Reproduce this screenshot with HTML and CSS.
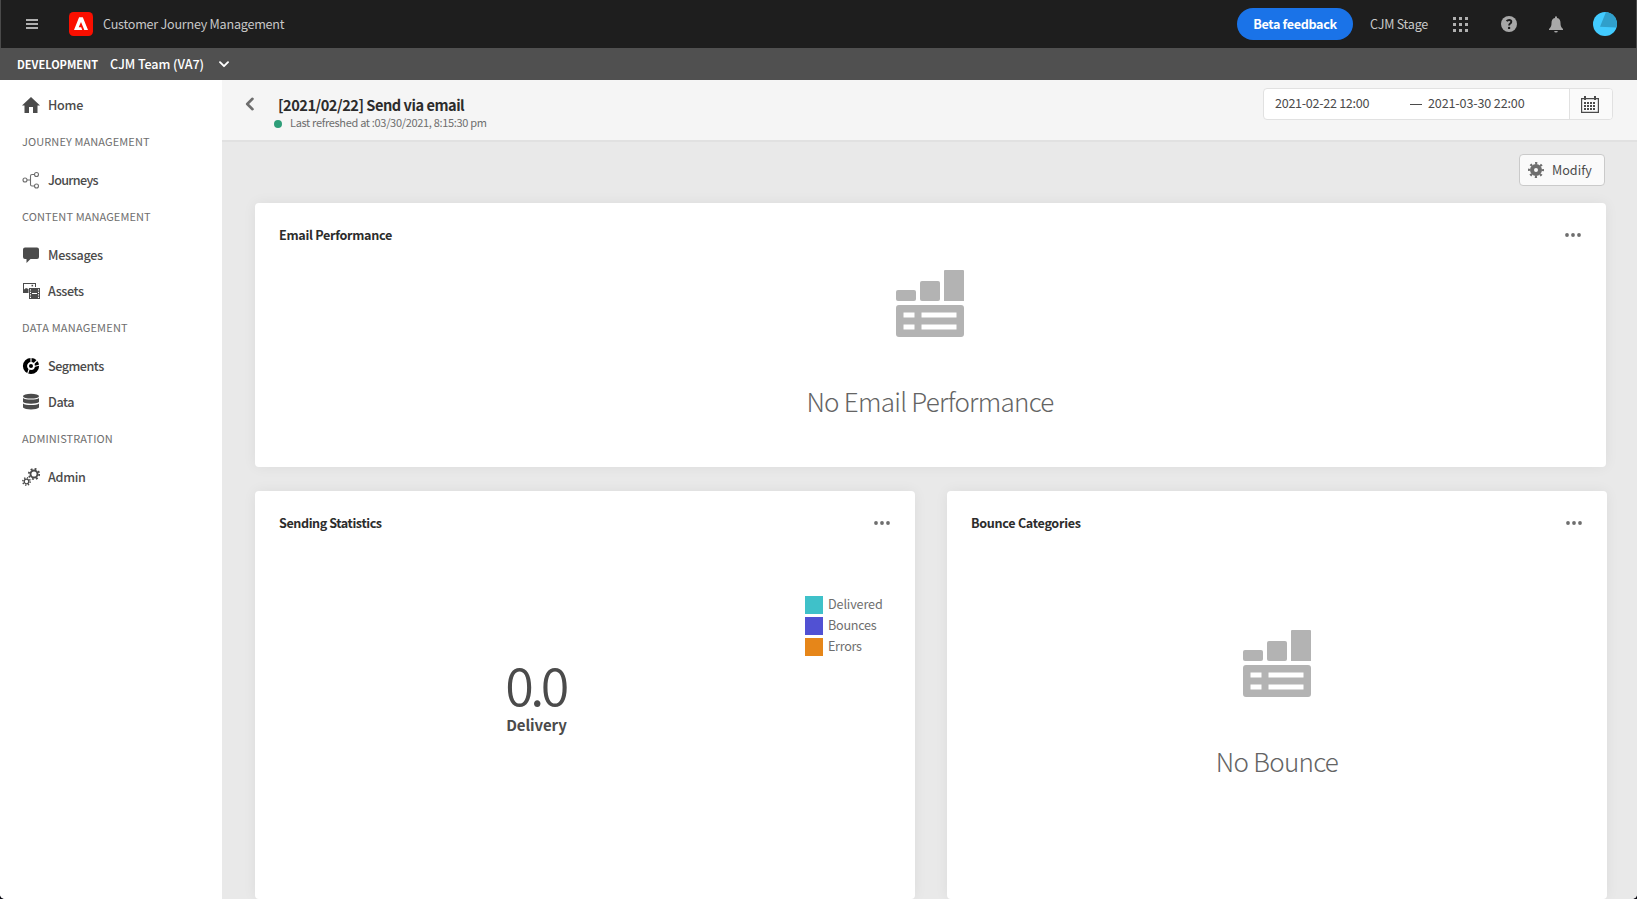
FILE: index.html
```html
<!DOCTYPE html>
<html lang="en">
<head>
<meta charset="utf-8">
<title>Customer Journey Management</title>
<link rel="stylesheet" href="styles.css">
</head>
<body>
<div class="app">
  <header class="topbar">
    <svg class="menu-icon" width="12" height="10" viewBox="0 0 12 10"><path d="M0 0h12v2H0zM0 4h12v2H0zM0 8h12v2H0z" fill="#b0b0b0"/></svg>
    <svg class="logo" width="24" height="24" viewBox="0 0 24 24"><rect width="24" height="24" rx="4.5" fill="#fa0f00"/><path fill="#fff" fill-rule="evenodd" d="M10.1 5.3h3.7L19 18H5zM12 10l-2.3 5.2h2.5l1 2.8h2.1z"/></svg>
    <span class="product">Customer Journey Management</span>
    <div class="topbar-right">
      <button class="beta"><span>Beta feedback</span></button>
      <span class="org">CJM Stage</span>
      <svg class="apps" width="15" height="15" viewBox="0 0 15 15" fill="#b0b0b0"><path d="M0 0h3v3H0zM6 0h3v3H6zM12 0h3v3h-3zM0 6h3v3H0zM6 6h3v3H6zM12 6h3v3h-3zM0 12h3v3H0zM6 12h3v3H6zM12 12h3v3h-3z"/></svg>
      <svg class="help" width="16" height="16" viewBox="0 0 16 16"><circle cx="8" cy="8" r="8" fill="#a8a8a8"/><path d="M5.6 5.2Q6.6 4 8.1 4q2.2 0 2.2 1.8 0 1-1.1 1.8T8.1 9.4" fill="none" stroke="#1e1e1e" stroke-width="1.9"/><circle cx="8.1" cy="11.9" r="1.2" fill="#1e1e1e"/></svg>
      <svg class="bell" width="14" height="17" viewBox="0 0 14 17" fill="#a8a8a8"><path d="M6 1.2a1 1 0 0 1 2 0v.9c2.600.4 3.500 2.500 3.500 4.800 0 3 .7 4.400 2.500 6.100v1H0v-1c1.800-1.700 2.500-3.100 2.500-6.100 0-2.300.9-4.400 3.500-4.800zM5.200 15h3.600a1.800 1.600 0 0 1-3.600 0z"/></svg>
      <svg class="avatar" width="24" height="24" viewBox="0 0 24 24"><circle cx="12" cy="12" r="12" fill="#42cbff"/><path d="M13 .1A12 12 0 0 1 24 12a12 12 0 0 1-.6 3.400L7 14.800z" fill="#309fcb"/></svg>
    </div>
  </header>
  <div class="envbar">
    <span class="env">DEVELOPMENT</span>
    <span class="sandbox">CJM Team (VA7)</span>
    <svg width="10" height="7" viewBox="0 0 10 7"><path d="M1 1.200l4 4 4-4" fill="none" stroke="#fff" stroke-width="1.900" stroke-linecap="round" stroke-linejoin="round"/></svg>
  </div>
  <div class="body">
    <nav class="sidebar">
      <a class="item"><svg width="18" height="18" viewBox="0 0 18 18"><path d="M9 1l9 8.500h-2.500V17H11v-6H7v6H2.500V9.500H0z" fill="#4b4b4b"/></svg><span class="t-home">Home</span></a>
      <h2 class="h-journey">JOURNEY MANAGEMENT</h2>
      <a class="item"><svg width="18" height="18" viewBox="0 0 18 18" fill="none" stroke="#6e6e6e" stroke-width="1.100"><circle cx="3" cy="9" r="2"/><circle cx="14.500" cy="3.500" r="2"/><circle cx="14.500" cy="15" r="2"/><path d="M5 9h4M12.500 3.500H10Q8.500 3.500 8.500 5v8.500Q8.500 15 10 15h2.500"/></svg><span class="t-journeys">Journeys</span></a>
      <h2 class="h-content">CONTENT MANAGEMENT</h2>
      <a class="item"><svg width="18" height="18" viewBox="0 0 18 18"><path d="M3 1.500h12a2 2 0 0 1 2 2V11a2 2 0 0 1-2 2H8.500L4.500 17v-4H3a2 2 0 0 1-2-2V3.500a2 2 0 0 1 2-2z" fill="#4b4b4b"/></svg><span class="t-messages">Messages</span></a>
      <a class="item"><svg width="18" height="18" viewBox="0 0 18 18" fill="#4b4b4b"><path d="M1 1h13v4h-1V2H2v5.500l2-1.500 2.500 1V11H1z"/><rect x="9.500" y="2.800" width="1.600" height="1.600"/><path fill-rule="evenodd" d="M7 6h11v11H7zM8 7.200v1.300h1V7.200zM8 9.800v1.300h1V9.800zM8 12.300v1.300h1v-1.300zM8 14.700V16h1v-1.300zM16 7.200v1.300h1V7.200zM16 9.800v1.300h1V9.800zM16 12.300v1.300h1v-1.300zM16 14.700V16h1v-1.300zM10 11v1h5v-1z"/></svg><span class="t-assets">Assets</span></a>
      <h2 class="h-data">DATA MANAGEMENT</h2>
      <a class="item"><svg width="18" height="18" viewBox="0 0 18 18"><circle cx="9" cy="9" r="6" fill="none" stroke="#000" stroke-width="4.200"/><circle cx="9" cy="9" r="2" fill="#000"/><path d="M9 5.500V0M11 7.500l5.500-5.500M12 9.500l6-1.500M7.500 11l-2 6" stroke="#fff" stroke-width="1.100"/></svg><span class="t-segments">Segments</span></a>
      <a class="item"><svg width="18" height="18" viewBox="0 0 18 18" fill="#4b4b4b"><ellipse cx="9" cy="3.200" rx="8" ry="2.400"/><path d="M1 5c2 2 14 2 16 0v4c-2 2.300-14 2.300-16 0zM1 10.500c2 2 14 2 16 0v4c-2 2.500-14 2.500-16 0z"/></svg><span class="t-data">Data</span></a>
      <h2 class="h-admin">ADMINISTRATION</h2>
      <a class="item"><svg width="18" height="18" viewBox="0 0 18 18" fill="none" stroke="#4b4b4b"><circle cx="12" cy="6" r="3.500" stroke-width="1.900"/><circle cx="12" cy="6" r="5.200" stroke-width="1.800" stroke-dasharray="1.900 2.184"/><circle cx="4.500" cy="13.500" r="2.300" stroke-width="1.300"/><circle cx="4.500" cy="13.500" r="3.700" stroke-width="1.500" stroke-dasharray="1.300 1.606"/></svg><span class="t-admin">Admin</span></a>
    </nav>
    <main class="main">
      <div class="pagehead">
        <svg class="back" width="10" height="14" viewBox="0 0 10 14"><path d="M7.500 1.800L2.200 7l5.300 5.200" fill="none" stroke="#6e6e6e" stroke-width="2.600" stroke-linecap="round" stroke-linejoin="round"/></svg>
        <div class="titles">
          <h1><span>[2021/02/22] Send via email</span></h1>
          <div class="refreshed"><i class="dot"></i><span>Last refreshed at :03/30/2021, 8:15:30 pm</span></div>
        </div>
        <div class="range">
          <span class="date from">2021-02-22 12:00</span><i class="dash"></i><span class="date to">2021-03-30 22:00</span>
          <div class="cal"><svg width="18" height="17" viewBox="0 0 18 17" fill="#4b4b4b"><path fill-rule="evenodd" d="M3 0h2v2h8V0h2v2h3v15H0V2h3zM1.200 3.200v12.600h15.600V3.200H15V4h-2v-.8H5V4H3v-.8z"/><path d="M6 6h2v2H6zM9 6h2v2H9zM12 6h2v2h-2zM3 9h2v2H3zM6 9h2v2H6zM9 9h2v2H9zM12 9h2v2h-2zM3 12h2v2H3zM6 12h2v2H6zM9 12h2v2H9zM12 12h2v2h-2zM3 6h2v2H3z"/></svg></div>
        </div>
      </div>
      <div class="content">
        <div class="actions">
          <button class="modify"><svg width="16" height="16" viewBox="0 0 16 16" fill="none" stroke="#6e6e6e"><circle cx="8" cy="8" r="4" stroke-width="4"/><circle cx="8" cy="8" r="6.900" stroke-width="2.200" stroke-dasharray="2.200 3.219" stroke-dashoffset="1.100"/></svg><span>Modify</span></button>
        </div>
        <section class="card wide">
          <div class="cardhead"><h3 class="c-email">Email Performance</h3><svg width="16" height="4" viewBox="0 0 16 4" fill="#6e6e6e"><circle cx="2" cy="2" r="1.900"/><circle cx="8" cy="2" r="1.900"/><circle cx="14" cy="2" r="1.900"/></svg></div>
          <div class="empty">
            <svg width="68" height="67" viewBox="0 0 68 67" fill="#b3b3b3"><rect y="20" width="20" height="11" rx="2"/><rect x="24" y="11" width="20" height="20" rx="2"/><path d="M49 0h18a1 1 0 0 1 1 1v30H48V1a1 1 0 0 1 1-1z"/><path fill-rule="evenodd" d="M3 35h62a3 3 0 0 1 3 3v26a3 3 0 0 1-3 3H3a3 3 0 0 1-3-3V38a3 3 0 0 1 3-3zM7.500 42.500v5h11v-5zM25.500 42.500v5h35v-5zM7.500 54.500v5h11v-5zM25.500 54.500v5h35v-5z"/></svg>
            <p class="e-email">No Email Performance</p>
          </div>
        </section>
        <div class="row">
          <section class="card tall">
            <div class="cardhead"><h3 class="c-sending">Sending Statistics</h3><svg width="16" height="4" viewBox="0 0 16 4" fill="#6e6e6e"><circle cx="2" cy="2" r="1.900"/><circle cx="8" cy="2" r="1.900"/><circle cx="14" cy="2" r="1.900"/></svg></div>
            <div class="stats">
              <div class="metric"><div class="num">0.0</div><div class="lbl">Delivery</div></div>
              <ul class="legend">
                <li><i class="sw teal"></i><span class="l-del">Delivered</span></li>
                <li><i class="sw indigo"></i><span class="l-bou">Bounces</span></li>
                <li><i class="sw orange"></i><span class="l-err">Errors</span></li>
              </ul>
            </div>
          </section>
          <section class="card tall">
            <div class="cardhead"><h3 class="c-bounce">Bounce Categories</h3><svg width="16" height="4" viewBox="0 0 16 4" fill="#6e6e6e"><circle cx="2" cy="2" r="1.900"/><circle cx="8" cy="2" r="1.900"/><circle cx="14" cy="2" r="1.900"/></svg></div>
            <div class="empty low">
              <svg width="68" height="67" viewBox="0 0 68 67" fill="#b3b3b3"><rect y="20" width="20" height="11" rx="2"/><rect x="24" y="11" width="20" height="20" rx="2"/><path d="M49 0h18a1 1 0 0 1 1 1v30H48V1a1 1 0 0 1 1-1z"/><path fill-rule="evenodd" d="M3 35h62a3 3 0 0 1 3 3v26a3 3 0 0 1-3 3H3a3 3 0 0 1-3-3V38a3 3 0 0 1 3-3zM7.500 42.500v5h11v-5zM25.500 42.500v5h35v-5zM7.500 54.500v5h11v-5zM25.500 54.500v5h35v-5z"/></svg>
              <p class="e-bounce">No Bounce</p>
            </div>
          </section>
        </div>
      </div>
    </main>
  </div>
</div>
</body>
</html>
```

FILE: styles.css
```css
* { box-sizing: border-box; }
html { background: #0b0b14; }
body { margin: 0; font-family: "Noto Sans CJK JP", "Noto Sans", sans-serif; font-size: 12.6px; color: #4b4b4b; }
h1, h2, h3, p, ul { margin: 0; padding: 0; }
svg { display: block; flex: none; }
button { font: inherit; padding: 0; margin: 0; }
span, h1, h2, h3, p { white-space: nowrap; }

.app { display: flex; flex-direction: column; width: 1637px; height: 899px; overflow: hidden; border-radius: 0 0 5px 5px; background: #fff; }

.topbar { display: flex; align-items: center; height: 48px; padding-left: 25px; background: #1e1e1e; border: 0 solid #4a4a4a; border-width: 0 1px; flex: none; }
.logo { margin-left: 31px; }
.product { margin-left: 10px; color: #c8c8c8; line-height: 20px; letter-spacing: -.24px; }
.topbar-right { display: flex; align-items: center; margin-left: auto; padding-right: 19px; }
.beta { width: 116px; height: 32px; border: 0; border-radius: 16px; background: #1a73e8; color: #fff; font-weight: 700; line-height: 20px; letter-spacing: -.35px; }
.org { width: 59px; margin-left: 17px; color: #c8c8c8; line-height: 20px; letter-spacing: -.25px; }
.apps { margin-left: 24px; }
.help { margin-left: 33px; }
.bell { margin-left: 32px; }
.avatar { margin-left: 30px; }

.envbar { display: flex; align-items: center; height: 32px; padding-left: 17px; background: #505050; color: #fff; flex: none; }
.env { width: 93px; font-size: 11px; font-weight: 700; line-height: 20px; }
.sandbox { width: 109px; font-weight: 500; line-height: 20px; letter-spacing: -.08px; }

.body { display: flex; flex: 1; min-height: 0; }
.sidebar { width: 222px; padding: 7px 0 0 22px; background: #fff; flex: none; }
.item { display: flex; align-items: center; gap: 8px; height: 36px; font-weight: 500; line-height: 20px; }
.t-home { letter-spacing: -.25px; }
.t-journeys { letter-spacing: -.7px; }
.t-messages { letter-spacing: -.3px; }
.t-assets, .t-data { letter-spacing: -.4px; }
.t-segments { letter-spacing: -.5px; }
.t-admin { letter-spacing: -.3px; }
.sidebar h2 { height: 39px; font-size: 11px; font-weight: 400; line-height: 37px; color: #6e6e6e; letter-spacing: .1px; }
.sidebar .h-data { letter-spacing: .2px; }

.main { display: flex; flex-direction: column; flex: 1; min-width: 0; background: #e9e9e9; }
.pagehead { display: flex; align-items: flex-start; height: 62px; padding: 8px 24px 0 23px; background: #f5f5f5; border-bottom: 2px solid #e1e1e1; flex: none; }
.back { margin-top: 9px; }
.titles { margin-left: 19px; }
.titles h1 { padding-left: 4px; font-size: 14.6px; font-weight: 700; line-height: 24px; height: 24px; margin-top: 5px; color: #2c2c2c; letter-spacing: -.48px; }
.refreshed { display: flex; align-items: center; height: 16px; font-size: 11px; line-height: 16px; color: #6e6e6e; margin-top: -2px; letter-spacing: -.32px; }
.refreshed span { padding-bottom: 2px; }
.dot { width: 8px; height: 8px; border-radius: 50%; background: #2d9d78; margin-right: 8px; margin-top: 1px; }
.range { display: flex; align-items: center; width: 350px; height: 32px; margin-left: auto; border: 1px solid #e1e1e1; border-radius: 4px; background: #fff; padding-left: 11px; font-weight: 400; }
.date { width: 135px; line-height: 20px; padding-bottom: 3px; }
.from { letter-spacing: -.3px; }
.to { letter-spacing: -.15px; }
.dash { width: 12px; height: 1px; background: #4b4b4b; margin-right: 6px; }
.cal { display: flex; align-items: center; justify-content: center; width: 43px; height: 30px; padding-right: 2px; margin-left: auto; border-left: 1px solid #e1e1e1; background: #fafafa; border-radius: 0 3px 3px 0; }

.content { flex: 1; min-height: 0; padding: 12px 30px 0 33px; }
.actions { display: flex; justify-content: flex-end; padding-right: 2px; }
.modify { display: flex; align-items: center; gap: 8px; width: 86px; height: 32px; padding-left: 8px; border: 1px solid #cacaca; border-radius: 4px; background: #fafafa; color: #4b4b4b; line-height: 20px; }
.card { background: #fff; border-radius: 4px; box-shadow: 0 0 14px rgba(0, 0, 0, .06); }
.wide { height: 264px; margin: 17px 1px 0 0; }
.row { display: grid; grid-template-columns: 660px 660px; gap: 32px; margin-top: 24px; }
.tall { height: 408px; }
.cardhead { display: flex; justify-content: space-between; align-items: center; height: 64px; padding: 0 25px 0 24px; }
.cardhead h3 { font-size: 12.6px; font-weight: 700; color: #2c2c2c; line-height: 20px; letter-spacing: -.3px; }
.cardhead .c-sending { letter-spacing: -.43px; }
.empty { display: flex; flex-direction: column; align-items: center; padding: 3px 1px 0 0; }
.low { padding: 75px 0 0; }
.empty p { margin-top: 44px; font-size: 26px; font-weight: 300; line-height: 40px; color: #646464; letter-spacing: -.73px; }
.stats { display: flex; }
.metric { width: 60px; margin: 99px 0 0 252px; text-align: center; }
.num { font-family: "Noto Sans CJK JP DemiLight", "Noto Sans CJK JP", sans-serif; font-size: 52px; font-weight: 350; line-height: 60px; letter-spacing: -3.500px; margin: 0 0 0 -3px; }
.lbl { font-size: 15px; font-weight: 700; line-height: 20px; padding-top: 1px; margin-left: -1px; letter-spacing: -.1px; }
.legend { list-style: none; margin: 41px 0 0 238px; color: #6e6e6e; }
.legend li { display: flex; align-items: center; height: 18px; margin-bottom: 3px; line-height: 18px; }
.legend span { padding-bottom: 3px; }
.l-del { letter-spacing: -.12px; }
.l-bou { letter-spacing: -.25px; }
.l-err { letter-spacing: -.3px; }
.sw { width: 18px; height: 18px; margin-right: 5px; }
.teal { background: #3fc1c9; }
.indigo { background: #5151d3; }
.orange { background: #e68619; }
```
